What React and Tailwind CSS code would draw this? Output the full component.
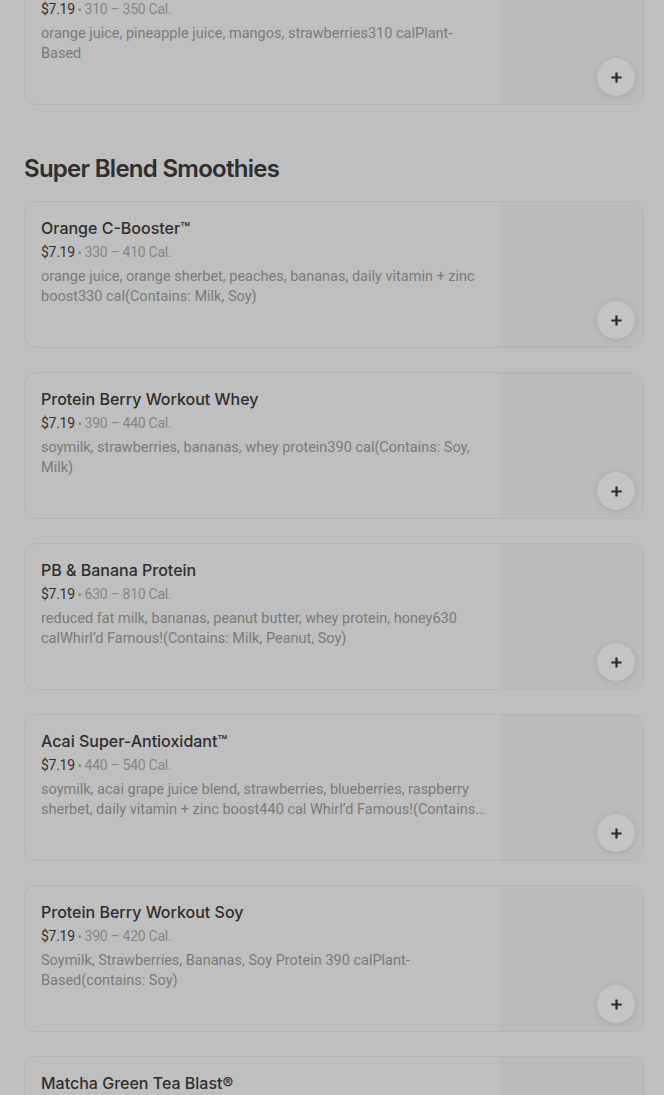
import React from 'react';

const items = [
  {
    name: 'Mango-A-Go-Go®',
    price: '$7.19',
    cal: '310 – 350 Cal.',
    desc: 'orange juice, pineapple juice, mangos, strawberries310 calPlant-Based',
  },
];

const smoothies = [
  {
    name: 'Orange C-Booster™',
    price: '$7.19',
    cal: '330 – 410 Cal.',
    desc: 'orange juice, orange sherbet, peaches, bananas, daily vitamin + zinc boost330 cal(Contains: Milk, Soy)',
  },
  {
    name: 'Protein Berry Workout Whey',
    price: '$7.19',
    cal: '390 – 440 Cal.',
    desc: 'soymilk, strawberries, bananas, whey protein390 cal(Contains: Soy, Milk)',
  },
  {
    name: 'PB & Banana Protein',
    price: '$7.19',
    cal: '630 – 810 Cal.',
    desc: 'reduced fat milk, bananas, peanut butter, whey protein, honey630 calWhirl’d Famous!(Contains: Milk, Peanut, Soy)',
  },
  {
    name: 'Acai Super-Antioxidant™',
    price: '$7.19',
    cal: '440 – 540 Cal.',
    desc: 'soymilk, acai grape juice blend, strawberries, blueberries, raspberry sherbet, daily vitamin + zinc boost440 cal Whirl’d Famous!(Contains: Soy, Milk)',
  },
  {
    name: 'Protein Berry Workout Soy',
    price: '$7.19',
    cal: '390 – 420 Cal.',
    desc: 'Soymilk, Strawberries, Bananas, Soy Protein 390 calPlant-Based(contains: Soy)',
  },
  {
    name: 'Matcha Green Tea Blast®',
    price: '$7.19',
    cal: '380 – 470 Cal.',
    desc: 'soymilk, matcha green tea, bananas, mangos, sherbet',
  },
];

const PlusIcon = () => (
  <svg width="13" height="13" viewBox="0 0 14 14" fill="none">
    <path d="M7 1.5v11M1.5 7h11" stroke="#2a2a2a" strokeWidth="2.4" />
  </svg>
);

const ItemCard = ({ item }) => {
  return (
    <div className="relative flex h-[147px] overflow-hidden rounded-xl border border-[#b4b4b4] bg-[#bfbfbf]">
      <div className="flex-1 min-w-0 px-4 pt-4">
        <h3 className="text-[16px] leading-5 font-medium text-[#2e2e2e]" style={{ fontFamily: 'Inter, sans-serif' }}>
          {item.name}
        </h3>
        <p className="mt-1 text-[14px] leading-5 tracking-[-0.02em]">
          <span className="text-[#333333]">{item.price}</span>
          <span className="mx-[3px] text-[12px] text-[#858585]">•</span>
          <span className="text-[#858585]">{item.cal}</span>
        </p>
        <p className="mt-1 text-[14.5px] leading-5 text-[#7a7a7a] line-clamp-2">{item.desc}</p>
      </div>
      <div className="w-[142px] shrink-0 bg-[#bbbbbb]"></div>
      <button className="absolute bottom-2 right-2 flex h-[38px] w-[38px] items-center justify-center rounded-full bg-[#c4c4c4] shadow-[0_1px_6px_rgba(0,0,0,0.12)]">
        <PlusIcon />
      </button>
    </div>
  );
};

export default function App() {
  return (
    <div className="h-[1095px] overflow-hidden bg-[#bfbfbf]" style={{ fontFamily: 'Roboto, "Noto Sans", sans-serif' }}>
      <div className="pl-6 pr-5 -mt-[42px]">
        <div className="flex flex-col gap-6">
          {items.map((item) => (
            <ItemCard key={item.name} item={item} />
          ))}
        </div>

        <h2
          className="mt-12 mb-4 text-[24px] leading-8 font-semibold tracking-[-0.03em] text-[#2e2e2e]"
          style={{ fontFamily: 'Inter, sans-serif' }}
        >
          Super Blend Smoothies
        </h2>

        <div className="flex flex-col gap-6">
          {smoothies.map((item) => (
            <ItemCard key={item.name} item={item} />
          ))}
        </div>
      </div>
    </div>
  );
}
